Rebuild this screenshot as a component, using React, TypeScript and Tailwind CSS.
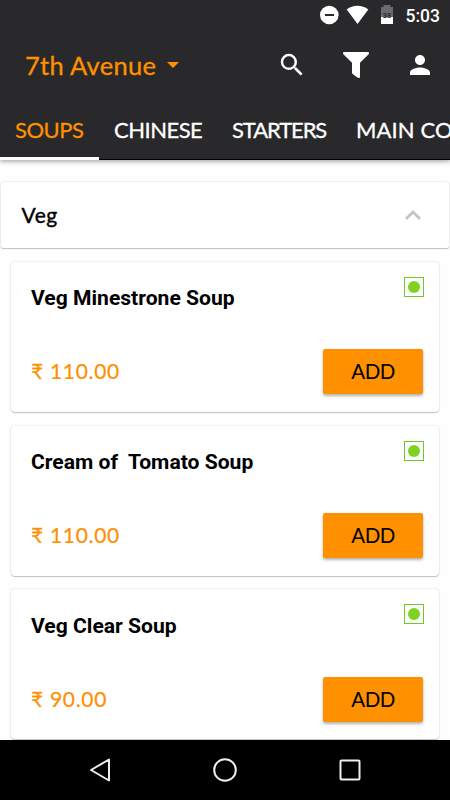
import React, { useState } from "react";

interface MenuItem {
  name: string;
  price: string;
}

const TABS = [
  { label: "SOUPS", box: "w-[99px] pl-[15px]", text: "tracking-[-0.5px]" },
  { label: "CHINESE", box: "w-[118px] pl-[15px]", text: "tracking-[-0.5px]" },
  { label: "STARTERS", box: "w-[124px] pl-[15px]", text: "tracking-[-1.1px]" },
  { label: "MAIN COURSE", box: "w-[160px] pl-[15px]", text: "tracking-[0.1px]" },
];

const ITEMS: MenuItem[] = [
  { name: "Veg Minestrone Soup", price: "110.00" },
  { name: "Cream of  Tomato Soup", price: "110.00" },
  { name: "Veg Clear Soup", price: "90.00" },
];

const StatusBar = () => (
  <div className="flex h-[30px] shrink-0 items-center justify-end pr-[10px] text-white">
    <svg className="mr-[2px] h-[30px] w-[86px]" viewBox="0 0 86 30">
      <circle cx="11.3" cy="15" r="9.3" fill="#fff" />
      <rect x="7" y="14" width="9" height="2" fill="#29292b" />
      <path d="M28.700 9.500C35 4.600 44 4.600 50.300 9.500L39.500 24Z" fill="#fff" />
      <path d="M65.500 5h7v2H75v10H63V7h2.500Z" fill="#6b6b6c" />
      <path d="M63 17h12v7H63z" fill="#fff" />
      <text x="69" y="17.500" textAnchor="middle" fontFamily="Roboto" fontWeight="700" fontSize="7.500" fill="#29292b">38</text>
    </svg>
    <span className="pt-px font-['Roboto',sans-serif] text-[17.500px] leading-[30px] font-medium">5:03</span>
  </div>
);

const Toolbar = () => (
  <div className="flex h-[70px] shrink-0 items-center pl-[25px] text-[#ff9000]">
    <span className="w-[142px] text-[25.500px] leading-[70px] tracking-[0.3px] whitespace-nowrap [-webkit-text-stroke:0.3px]">7th Avenue</span>
    <svg className="h-[6px] w-[12px]" viewBox="0 0 12 6">
      <path d="M0 0h12L6 6z" fill="currentColor" />
    </svg>
    <svg className="ml-[98px] h-[30px] w-[30px]" viewBox="0 0 24 24" fill="#fff">
      <path d="M15.5 14h-.79l-.28-.27A6.471 6.471 0 0 0 16 9.5 6.5 6.500 0 1 0 9.500 16c1.610 0 3.090-.590 4.230-1.570l.270.280v.790l5 4.990L20.490 19l-4.990-5zm-6 0C7.010 14 5 11.990 5 9.500S7.010 5 9.500 5 14 7.010 14 9.500 11.990 14 9.500 14z" />
    </svg>
    <svg className="ml-[36px] h-[26px] w-[26px]" viewBox="0 0 26 26" fill="#fff">
      <path d="M1 0h24q1 0 1 1t-.6 1.600L17 10.800V25q0 1-1 1-1 0-2-.8L10 22.300Q9 21.500 9 20.500V10.800L.6 2.600Q0 2 0 1t1-1z" />
    </svg>
    <svg className="ml-[36px] h-[30px] w-[30px]" viewBox="0 0 24 24" fill="#fff">
      <path d="M12 12c2.210 0 4-1.790 4-4s-1.790-4-4-4-4 1.790-4 4 1.790 4 4 4zm0 2c-2.670 0-8 1.340-8 4v2h16v-2c0-2.660-5.330-4-8-4z" />
    </svg>
  </div>
);

const ItemCard = ({ item }: { item: MenuItem }) => (
  <div className="flex h-[150px] shrink-0 flex-col justify-between rounded-[4px] bg-white pt-[15px] pr-[15px] pb-[17.500px] pl-[20px] shadow-[0_1px_1px_rgba(0,0,0,0.2),0_0_2px_rgba(0,0,0,0.18)]">
    <div className="flex items-start justify-between">
      <h3 className="pt-[7.250px] font-['Roboto',sans-serif] text-[21.100px] leading-[28px] font-bold whitespace-pre text-black">{item.name}</h3>
      <div className="flex h-5 w-5 items-center justify-center border border-[#6ccb22]">
        <div className="h-3 w-3 rounded-full bg-[#7ed321]" />
      </div>
    </div>
    <div className="flex items-center justify-between pr-px">
      <span className="pb-[2px] text-[21px] tracking-[0.7px] text-[#ff8f00] [-webkit-text-stroke:0.2px]">₹ {item.price}</span>
      <button className="h-[45px] w-[100px] rounded-[2px] bg-[#ff9000] text-[20.500px] tracking-[-0.6px] text-black shadow-[0_2px_3px_rgba(0,0,0,0.3)]">ADD</button>
    </div>
  </div>
);

const App = () => {
  const [activeTab, setActiveTab] = useState(0);

  return (
    <div className="flex h-[800px] w-[450px] flex-col overflow-hidden bg-[#fefefe] font-['Lato','Open_Sans',sans-serif]">
      {/* Header */}
      <header className="z-10 flex h-[160px] shrink-0 flex-col border-b border-black bg-[#29292b] shadow-[0_2px_4px_rgba(0,0,0,0.3)]">
        <StatusBar />
        <Toolbar />
        <nav className="-mb-px flex h-[60px] overflow-hidden">
          {TABS.map((tab, idx) => (
            <button
              key={tab.label}
              onClick={() => setActiveTab(idx)}
              className={`shrink-0 border-b-[3px] pt-px text-left text-[22px] whitespace-nowrap [-webkit-text-stroke:0.3px] ${tab.box} ${
                activeTab === idx ? "border-white text-[#ff9000]" : "border-transparent text-white"
              }`}
            >
              <span className={tab.text}>{tab.label}</span>
            </button>
          ))}
        </nav>
      </header>

      {/* Menu */}
      <main className="flex min-h-0 flex-1 flex-col overflow-hidden pt-[22px]">
        <div className="mx-px flex h-[66px] shrink-0 items-center justify-between rounded-[2px] bg-white pr-[28px] pl-[20.500px] shadow-[0_1px_1px_rgba(0,0,0,0.2),0_0_2px_rgba(0,0,0,0.2)]">
          <span className="text-[21px] tracking-[0.5px] text-black [-webkit-text-stroke:0.4px]">Veg</span>
          <svg className="h-[10px] w-[16px]" viewBox="0 0 16 10" fill="none" stroke="#c4c4c6" strokeWidth="2.800">
            <path d="M1 9l7-7 7 7" />
          </svg>
        </div>
        <div className="mx-[11px] mt-[13.750px] flex flex-col gap-[13.750px]">
          {ITEMS.map((item) => (
            <ItemCard key={item.name} item={item} />
          ))}
        </div>
      </main>

      {/* Android navigation bar */}
      <footer className="flex h-[60px] shrink-0 items-center justify-center gap-[101px] bg-black">
        <svg className="h-6 w-6" viewBox="0 0 24 24" fill="none" stroke="#eee" strokeWidth="2" strokeLinejoin="round">
          <path d="M21 1.500v21L3 12z" />
        </svg>
        <svg className="h-6 w-6" viewBox="0 0 24 24" fill="none" stroke="#eee" strokeWidth="2">
          <circle cx="12" cy="12" r="10.800" />
        </svg>
        <svg className="h-6 w-6" viewBox="0 0 24 24" fill="none" stroke="#eee" strokeWidth="2">
          <rect x="2.500" y="2.500" width="19" height="19" rx="1" />
        </svg>
      </footer>
    </div>
  );
};

export default App;
